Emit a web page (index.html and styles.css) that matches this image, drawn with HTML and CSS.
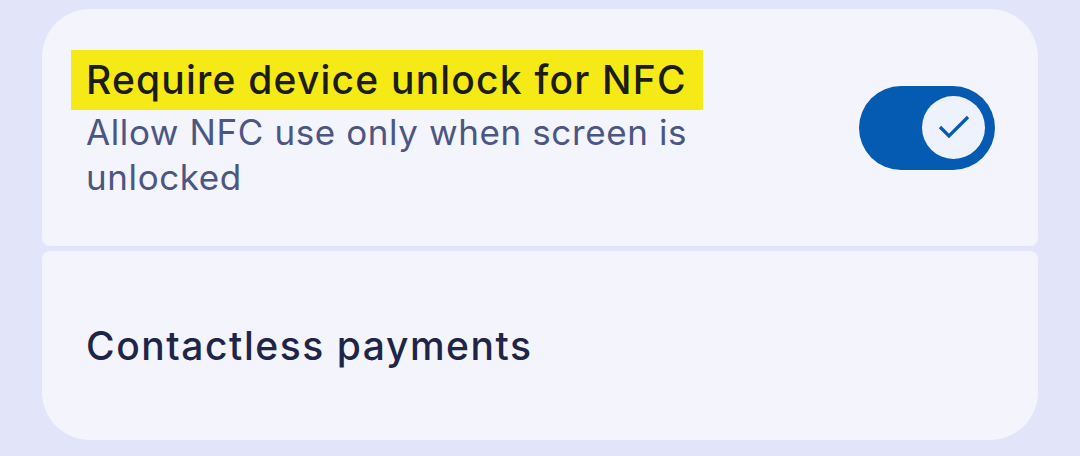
FILE: index.html
```html
<!DOCTYPE html>
<html lang="en">
<head>
<meta charset="utf-8">
<title>NFC settings</title>
<link rel="stylesheet" href="styles.css">
</head>
<body>
<main class="page">
  <section class="card card-top">
    <div class="text">
      <div class="title"><span class="hl">Require device unlock for NFC</span></div>
      <div class="summary">Allow NFC use only when screen is<br>unlocked</div>
    </div>
    <div class="switch" role="switch" aria-checked="true">
      <div class="thumb">
        <svg class="check" viewBox="0 0 42 42" width="42" height="42" aria-hidden="true">
          <polyline points="7,20 16,29 35,10" fill="none" stroke="#0859b0" stroke-width="3.2" stroke-linecap="butt" stroke-linejoin="miter"/>
        </svg>
      </div>
    </div>
  </section>
  <section class="card card-bottom">
    <div class="title plain">Contactless payments</div>
  </section>
</main>
</body>
</html>
```
FILE: styles.css
```css
html, body {
  margin: 0;
  padding: 0;
  background: #e2e4fa;
}
body {
  font-family: Inter, "Noto Sans", sans-serif;
  width: 1080px;
  height: 456px;
  overflow: hidden;
}
.page {
  padding: 9px 42px 0 42px;
  display: flex;
  flex-direction: column;
  gap: 5px;
}
.card {
  background: #f4f4fd;
  display: flex;
  align-items: center;
  box-sizing: border-box;
}
.card-top {
  height: 237px;
  border-radius: 48px 48px 8px 8px;
  padding: 0 43px 0 44px;
  justify-content: space-between;
}
.card-bottom {
  height: 189px;
  border-radius: 8px 8px 48px 48px;
  padding: 0 44px;
}
.text {
  display: flex;
  flex-direction: column;
  padding-bottom: 5px;
}
.title {
  font-size: 39px;
  font-weight: 500;
  color: #1b1c14;
  letter-spacing: 1.2px;
}
.hl {
  display: inline-block;
  background: #f5e916;
  height: 60px;
  line-height: 60px;
  padding: 0 16px 0 15px;
  margin-left: -15px;
}
.summary {
  font-size: 35px;
  line-height: 45px;
  color: #4b5683;
  letter-spacing: 0.6px;
}
.plain {
  color: #1f2546;
  letter-spacing: 1.55px;
}
.switch {
  width: 136px;
  height: 84px;
  border-radius: 42px;
  background: #055ab2;
  display: flex;
  align-items: center;
  justify-content: flex-end;
  padding-right: 10px;
  box-sizing: border-box;
  flex: none;
}
.thumb {
  width: 63px;
  height: 63px;
  border-radius: 50%;
  background: #eef2fc;
  display: flex;
  align-items: center;
  justify-content: center;
}
.check {
  display: block;
}
```
